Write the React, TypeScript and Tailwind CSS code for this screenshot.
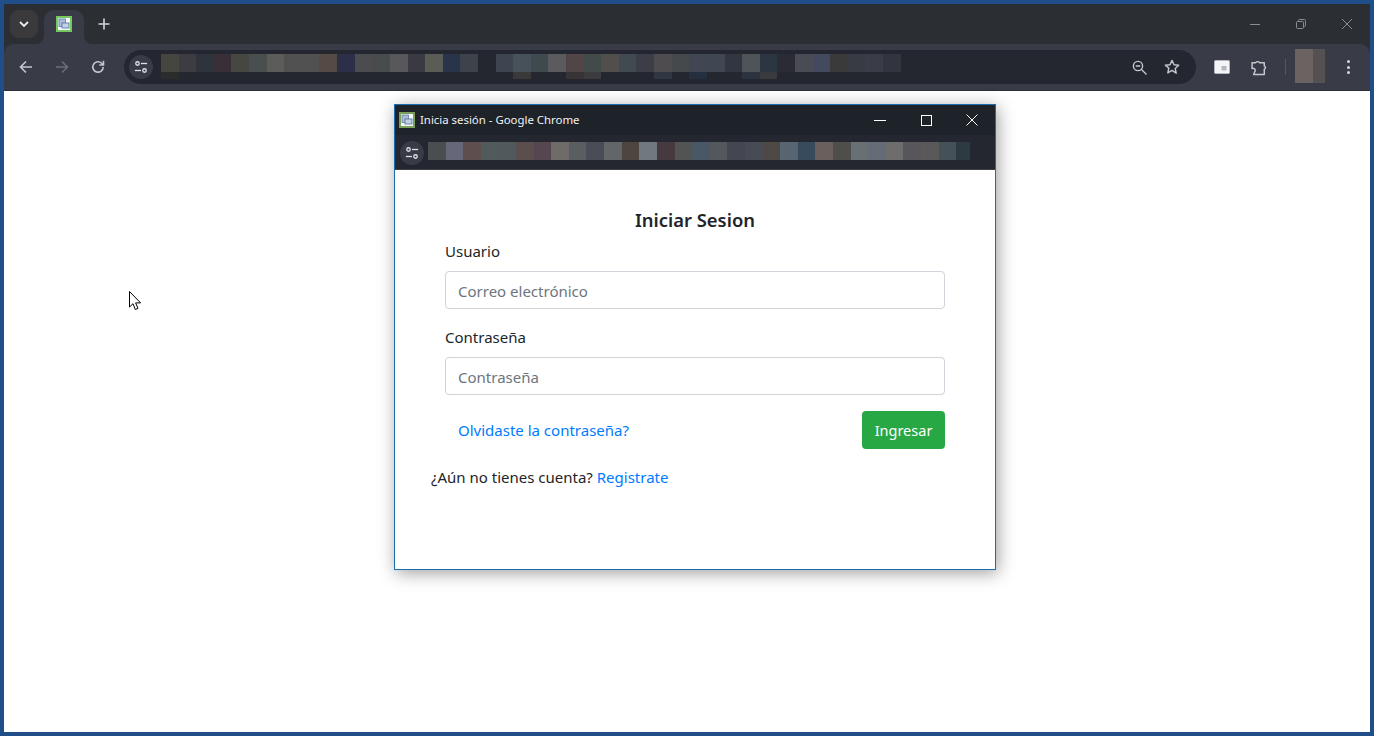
import React from 'react';

type Cell = [string, string?];

const toolbarCells: Cell[] = [
  ['bg-[#45463f]', 'bg-[#2b2c2c]'], ['bg-[#3e3c43]'], ['bg-[#2e333c]'], ['bg-[#382f38]'], ['bg-[#474742]'], ['bg-[#494e4e]'],
  ['bg-[#5c5c5b]'], ['bg-[#515151]'], ['bg-[#515151]'], ['bg-[#554a44]'], ['bg-[#2c2f47]'], ['bg-[#4b4b50]'],
  ['bg-[#494c4d]'], ['bg-[#58585c]'], ['bg-[#3a3a43]'], ['bg-[#5a5c56]'], ['bg-[#27344a]'], ['bg-[#3e424b]'],
  ['bg-transparent'],
  ['bg-[#3e4450]'], ['bg-[#465159]', 'bg-[#3a3838]'], ['bg-[#3f4a4e]'], ['bg-[#5b5b5f]'], ['bg-[#524547]', 'bg-[#383436]'],
  ['bg-[#434a4a]', 'bg-[#3c3c3e]'], ['bg-[#504f4c]'], ['bg-[#414a50]'], ['bg-[#3b3e47]'], ['bg-[#4f4c4f]', 'bg-[#2f3842]'],
  ['bg-[#45494c]'], ['bg-[#404753]', 'bg-[#243040]'], ['bg-[#404753]'], ['bg-[#323640]'], ['bg-[#4e5558]', 'bg-[#2d3340]'],
  ['bg-[#2b3642]', 'bg-[#393a3d]'], ['bg-[#2b2b35]'],
  ['bg-[#4a4c55]'], ['bg-[#434a5e]'], ['bg-[#3b3a3b]'], ['bg-[#383b44]'], ['bg-[#3a3c47]'], ['bg-[#32353d]'],
];

const popupCells: Cell[] = [
  ['bg-[#4a4e4f]'], ['bg-[#666779]'], ['bg-[#5e4e4d]'], ['bg-[#525b5b]'], ['bg-[#50595c]'], ['bg-[#5b4f4e]'], ['bg-[#564650]'],
  ['bg-[#6e6b69]'], ['bg-[#595e60]'], ['bg-[#4a4d57]'], ['bg-[#636669]'], ['bg-[#4f4540]'], ['bg-[#707880]'], ['bg-[#473940]'],
  ['bg-[#515452]'], ['bg-[#4a5866]'], ['bg-[#52585c]'], ['bg-[#444751]'], ['bg-[#474b53]'], ['bg-[#4f4945]'], ['bg-[#586570]'],
  ['bg-[#384b5d]'], ['bg-[#6b5f5d]'], ['bg-[#4e4e4a]'], ['bg-[#687074]'], ['bg-[#656c78]'], ['bg-[#6d6d6d]'], ['bg-[#58565a]'],
  ['bg-[#5a5859]'], ['bg-[#445257]'], ['bg-[#2e3a42]'],
];

function Mosaic({ cells }: { cells: Cell[] }) {
  return (
    <div className="flex">
      {cells.map(([top, bottom], i) => (
        <div key={i} className="w-[17.62px] shrink-0">
          <div className={`h-[18px] ${top}`} />
          {bottom && <div className={`h-[7px] ${bottom}`} />}
        </div>
      ))}
    </div>
  );
}

function Favicon({ className, green }: { className: string; green: string }) {
  return (
    <svg viewBox="0 0 16 16" className={className}>
      <rect x="0" y="0" width="16" height="16" fill={green} />
      <rect x="2" y="2" width="12" height="12" fill="#f4f7fb" />
      <rect x="3" y="3" width="6.500" height="7.500" fill="#a9bdd6" stroke="#5f7ea6" strokeWidth="0.8" />
      <rect x="6" y="7" width="7" height="5" fill="#c3d0e2" stroke="#4f6f99" strokeWidth="0.8" />
    </svg>
  );
}

function TuneIcon({ size }: { size: number }) {
  return (
    <svg width={size} height={size} viewBox="0 0 16 16" fill="none" stroke="#dfe1e5" strokeWidth="1.500">
      <circle cx="4" cy="4" r="2" />
      <path d="M8 4h7" />
      <circle cx="12" cy="12" r="2" />
      <path d="M1 12h7" />
    </svg>
  );
}

function NavIcon({ d, stroke }: { d: string; stroke: string }) {
  return (
    <div className="flex w-[36px] items-center justify-center">
      <svg width="16" height="16" viewBox="0 0 16 16" fill="none" stroke={stroke} strokeWidth="1.600">
        <path d={d} />
      </svg>
    </div>
  );
}

function TabFlare({ side }: { side: 'left' | 'right' }) {
  return side === 'left' ? (
    <svg width="8" height="8" viewBox="0 0 8 8" className="absolute bottom-0 left-[-8px]">
      <path d="M8 0v8H0a8 8 0 0 0 8-8z" fill="#393c46" />
    </svg>
  ) : (
    <svg width="8" height="8" viewBox="0 0 8 8" className="absolute bottom-0 right-[-8px]">
      <path d="M0 0v8h8a8 8 0 0 1-8-8z" fill="#393c46" />
    </svg>
  );
}

function FormLabel({ children }: { children: React.ReactNode }) {
  return <label className="mb-2 block h-6 text-[15px] leading-6 text-[#212529]">{children}</label>;
}

function FormInput({ placeholder }: { placeholder: string }) {
  return (
    <input
      placeholder={placeholder}
      className="block h-[38px] w-full rounded-[4px] border border-[#ced4da] bg-white px-3 pt-[2px] text-[15px] placeholder:text-[#6c757d]"
    />
  );
}

function LoginPopup() {
  return (
    <div className="absolute left-[390px] top-[13px] h-[466px] w-[602px] border border-[#1c6cb0] bg-white shadow-[2px_3px_16px_rgba(0,0,0,0.38)]">
      <div className="flex h-[30px] items-center bg-[#1e2229] pl-[4px]">
        <Favicon className="h-4 w-4" green="#7ba05b" />
        <span className="ml-[5px] text-[11.400px] text-[#f1f2f3]">Inicia sesión - Google Chrome</span>
        <div className="ml-auto flex h-full">
          <div className="flex w-[46px] items-center justify-center">
            <svg width="12" height="12" viewBox="0 0 12 12" stroke="#fff" fill="none"><path d="M0 6.500h12" /></svg>
          </div>
          <div className="flex w-[46px] items-center justify-center">
            <svg width="11" height="11" viewBox="0 0 11 11" stroke="#fff" fill="none"><rect x="0.500" y="0.500" width="10" height="10" /></svg>
          </div>
          <div className="flex w-[46px] items-center justify-center">
            <svg width="12" height="12" viewBox="0 0 12 12" stroke="#fff" fill="none"><path d="M0.500 0.500l11 11M11.500 0.500l-11 11" /></svg>
          </div>
        </div>
      </div>
      <div className="flex h-[35px] border-b border-[#3a3d42] bg-[#24272f] pl-[5px]">
        <div className="mt-[6px] flex h-[24px] w-[24px] items-center justify-center rounded-full bg-[#393c46]">
          <TuneIcon size={14} />
        </div>
        <div className="ml-[4px] mt-[7px] h-[18px] w-[542px] overflow-hidden">
          <Mosaic cells={popupCells} />
        </div>
      </div>
      <div className="px-[36px] pt-[35px]">
        <h1 className="h-[30px] text-center text-[18.400px] font-semibold leading-[30px] text-[#212529]">Iniciar Sesion</h1>
        <div className="mt-[4px] px-[14px]">
          <FormLabel>Usuario</FormLabel>
          <FormInput placeholder="Correo electrónico" />
          <div className="mt-4">
            <FormLabel>Contraseña</FormLabel>
            <FormInput placeholder="Contraseña" />
          </div>
          <div className="mt-4 flex items-center justify-between">
            <a className="pl-[13px] text-[15px] text-[#007bff]">Olvidaste la contraseña?</a>
            <button className="h-[38px] w-[83px] rounded-[4px] bg-[#28a745] pt-px text-[14.500px] text-white">Ingresar</button>
          </div>
        </div>
        <p className="mt-4 text-[15px] leading-6 text-[#212529]">
          ¿Aún no tienes cuenta? <a className="text-[#007bff]">Registrate</a>
        </p>
      </div>
    </div>
  );
}

export default function App() {
  return (
    <div className="flex h-screen w-screen flex-col overflow-hidden border-4 border-[#1f4e89] bg-white font-['Noto_Sans',sans-serif]">
      {/* tab strip */}
      <div className="flex h-[40px] shrink-0 bg-[#2b2e33] pl-[6px] pt-[6px]">
        <div className="flex h-[28px] w-[28px] items-center justify-center rounded-[9px] bg-[#3a3a3c]">
          <svg width="10" height="6" viewBox="0 0 10 6" fill="none" stroke="#e8eaed" strokeWidth="1.800"><path d="M1 1l4 4 4-4" /></svg>
        </div>
        <div className="relative ml-[6px] flex h-[34px] w-[40px] items-start justify-center rounded-t-[10px] bg-[#393c46] pt-[6px]">
          <Favicon className="h-4 w-4" green="#74c95c" />
          <TabFlare side="left" />
          <TabFlare side="right" />
        </div>
        <div className="ml-[14px] flex h-[28px] items-center">
          <svg width="12" height="12" viewBox="0 0 12 12" stroke="#d5d7da" strokeWidth="1.600" fill="none"><path d="M6 0.500v11M0.500 6h11" /></svg>
        </div>
        <div className="ml-auto mt-[-6px] flex h-[40px]">
          <div className="flex w-[46px] items-center justify-center">
            <svg width="10" height="10" viewBox="0 0 10 10" stroke="#8a8c90" fill="none"><path d="M0 5.500h10" /></svg>
          </div>
          <div className="flex w-[46px] items-center justify-center">
            <svg width="10" height="10" viewBox="0 0 10 10" stroke="#8a8c90" fill="none"><rect x="0.500" y="2.500" width="7" height="7" rx="1" /><path d="M2.500 2.500v-1a1 1 0 0 1 1-1h5a1 1 0 0 1 1 1v5a1 1 0 0 1-1 1h-1" /></svg>
          </div>
          <div className="flex w-[46px] items-center justify-center">
            <svg width="10" height="10" viewBox="0 0 10 10" stroke="#8a8c90" fill="none"><path d="M0 0l10 10M10 0l-10 10" /></svg>
          </div>
        </div>
      </div>

      {/* toolbar */}
      <div className="shrink-0 bg-[#2b2e33]">
        <div className="flex h-[47px] rounded-t-[10px] border-b border-[#2f3037] bg-[#393c46] pl-[4px] pt-[6px]">
          <div className="flex h-[34px]">
            <NavIcon d="M14 8H2.500M8 2.500L2.500 8 8 13.500" stroke="#c4c7cc" />
            <NavIcon d="M2 8h11.500M8 2.500L13.500 8 8 13.500" stroke="#6b6e75" />
            <NavIcon d="M13.200 8a5.200 5.200 0 1 1-1.500-3.700L13.500 6M13.500 1.800V6H9.300" stroke="#c4c7cc" />
          </div>
          <div className="ml-[8px] flex h-[34px] w-[1072px] rounded-full bg-[#24272f] pl-[5px]">
            <div className="mt-[5px] flex h-[24px] w-[24px] shrink-0 items-center justify-center rounded-full bg-[#393c46]">
              <TuneIcon size={14} />
            </div>
            <div className="ml-[8px] mt-[4px]">
              <Mosaic cells={toolbarCells} />
            </div>
            <div className="ml-auto flex pr-[8px]">
              <div className="flex w-[32px] items-center justify-center pr-[2px]">
                <svg width="15" height="15" viewBox="0 0 15 15" fill="none" stroke="#c4c7cc" strokeWidth="1.400">
                  <circle cx="6" cy="6" r="4.600" />
                  <path d="M9.500 9.500l5 5M3.800 6h4.400" />
                </svg>
              </div>
              <div className="flex w-[32px] items-center justify-center">
                <svg width="16" height="16" viewBox="0 0 16 16" fill="none" stroke="#c4c7cc" strokeWidth="1.400" strokeLinejoin="round">
                  <path d="M8 1.400l2 4.400 4.700.5-3.500 3.200 1 4.700L8 11.400l-4.200 2.400 1-4.700L1.300 6.300l4.700-.5z" />
                </svg>
              </div>
            </div>
          </div>
          <div className="ml-[8px] flex h-[34px] w-[36px] items-center justify-center">
            <svg width="16" height="14" viewBox="0 0 16 14">
              <rect x="0.500" y="0.500" width="15" height="13" rx="1" fill="#f4f5f6" stroke="#b5b8bd" />
              <rect x="7.500" y="6" width="5" height="4.500" fill="#b5b7bb" />
            </svg>
          </div>
          <div className="ml-px flex h-[34px] w-[36px] items-center justify-center">
            <svg width="17" height="17" viewBox="0 0 16 16" fill="none" stroke="#c4c7cc" strokeWidth="1.400" strokeLinejoin="round">
              <path d="M1 3.500h3.500a2 2 0 0 1 3.500 0H12.500v3a1.700 1.700 0 0 1 0 3.200v4.800H2.500l1-2.500a2 2 0 0 0-.5-3 2 2 0 0 0-2 0z" />
            </svg>
          </div>
          <div className="ml-[8px] mt-[9px] h-[16px] w-px bg-[#54575f]" />
          <div className="ml-[9px] mt-[-1px] flex h-[34px] w-[30px]">
            <div className="w-[18px] bg-[#6a6362]" />
            <div className="w-[12px] bg-[#555052]" />
          </div>
          <div className="ml-[5px] flex h-[34px] w-[36px] flex-col items-center justify-center gap-[2.500px]">
            <div className="h-[3px] w-[3px] rounded-full bg-[#d5d7da]" />
            <div className="h-[3px] w-[3px] rounded-full bg-[#d5d7da]" />
            <div className="h-[3px] w-[3px] rounded-full bg-[#d5d7da]" />
          </div>
        </div>
      </div>

      {/* page */}
      <div className="relative flex-1 bg-white">
        <LoginPopup />
        <svg width="13" height="20" viewBox="0 0 13 20" className="absolute left-[125px] top-[200px]">
          <path d="M0.500 0.500v15.500l3.500-3.300 2.300 5.800 2.700-1.100-2.400-5.500h5z" fill="#fff" stroke="#000" strokeWidth="1" />
        </svg>
      </div>
    </div>
  );
}
